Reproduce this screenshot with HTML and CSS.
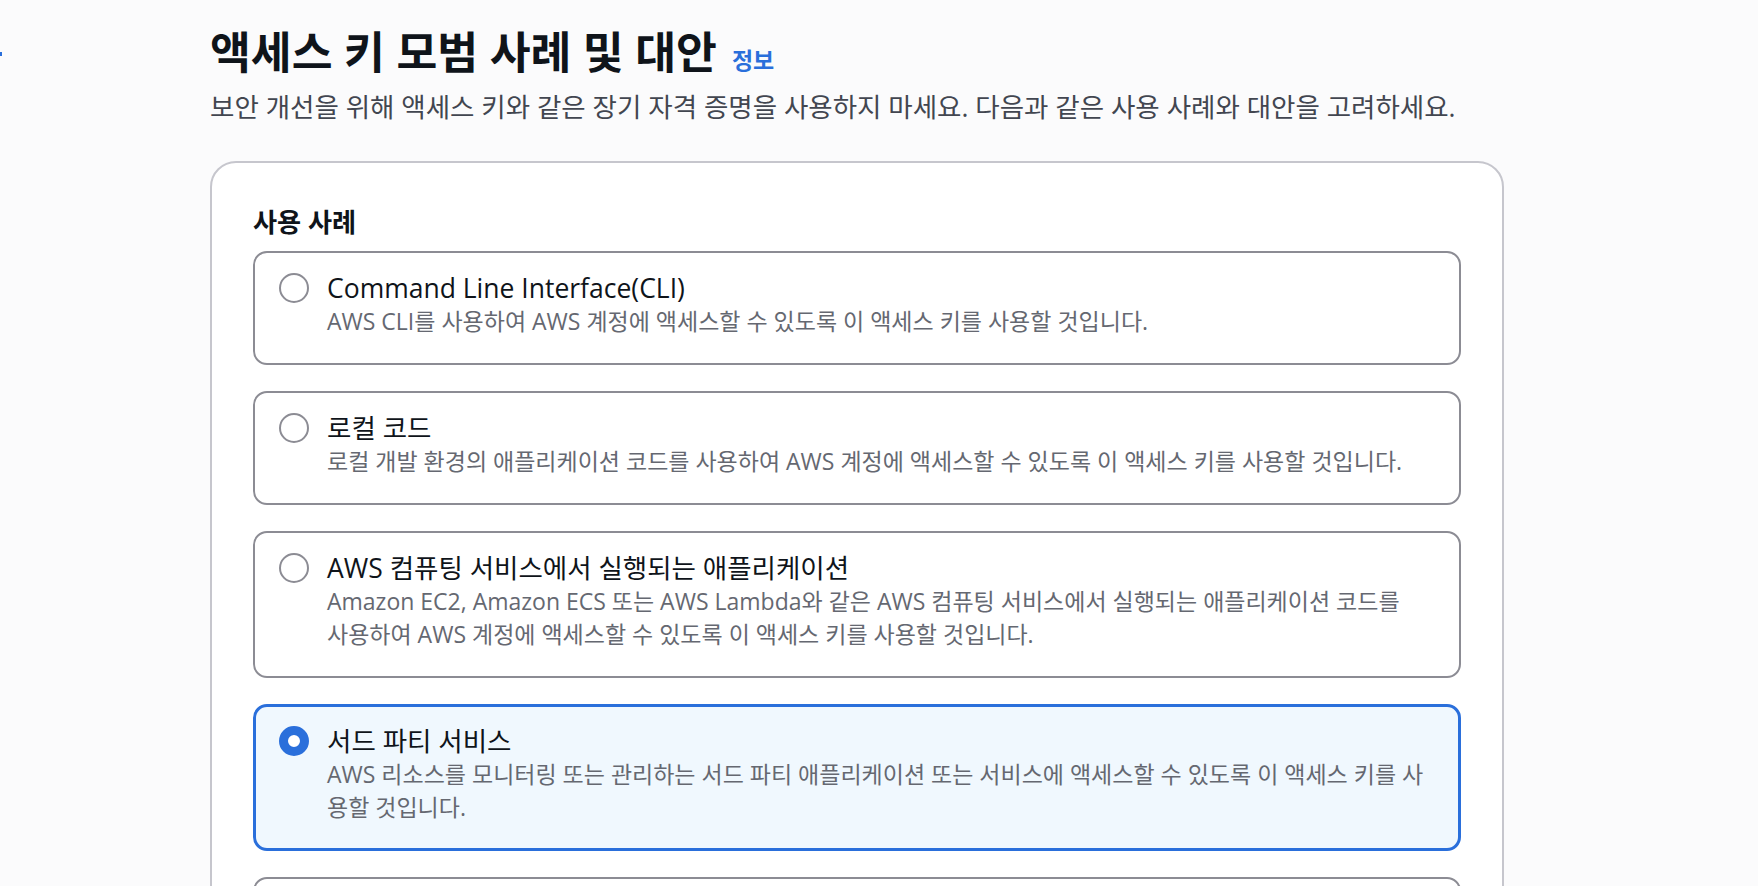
FILE: index.html
```html
<!DOCTYPE html>
<html lang="ko">
<head>
    <meta charset="UTF-8">
    <meta name="viewport" content="width=device-width, initial-scale=1.0">
    <title>액세스 키 모범 사례 및 대안</title>
    <link rel="stylesheet" href="styles.css">
</head>
<body>
    <div class="layout">
        <div class="rail"><span class="rail-mark"></span></div>

        <main class="content">
            <header class="page-header">
                <div class="title-row">
                    <h1>액세스 키 모범 사례 및 대안</h1>
                    <a href="#" class="info-link">정보</a>
                </div>
                <p class="page-desc">보안 개선을 위해 액세스 키와 같은 장기 자격 증명을 사용하지 마세요. 다음과 같은 사용 사례와 대안을 고려하세요.</p>
            </header>

            <section class="panel">
                <h2>사용 사례</h2>

                <div class="tiles">
                    <label class="tile">
                        <input type="radio" name="usecase" class="radio" value="cli">
                        <span class="tile-text">
                            <span class="tile-title">Command Line Interface(CLI)</span>
                            <span class="tile-desc">AWS CLI를 사용하여 AWS 계정에 액세스할 수 있도록 이 액세스 키를 사용할 것입니다.</span>
                        </span>
                    </label>

                    <label class="tile">
                        <input type="radio" name="usecase" class="radio" value="local">
                        <span class="tile-text">
                            <span class="tile-title">로컬 코드</span>
                            <span class="tile-desc">로컬 개발 환경의 애플리케이션 코드를 사용하여 AWS 계정에 액세스할 수 있도록 이 액세스 키를 사용할 것입니다.</span>
                        </span>
                    </label>

                    <label class="tile">
                        <input type="radio" name="usecase" class="radio" value="compute">
                        <span class="tile-text">
                            <span class="tile-title">AWS 컴퓨팅 서비스에서 실행되는 애플리케이션</span>
                            <span class="tile-desc">Amazon EC2, Amazon ECS 또는 AWS Lambda와 같은 AWS 컴퓨팅 서비스에서 실행되는 애플리케이션 코드를 <span class="nowrap">사용하여</span> AWS 계정에 액세스할 수 있도록 이 액세스 키를 사용할 것입니다.</span>
                        </span>
                    </label>

                    <label class="tile selected">
                        <input type="radio" name="usecase" class="radio" value="third-party" checked>
                        <span class="tile-text">
                            <span class="tile-title">서드 파티 서비스</span>
                            <span class="tile-desc">AWS 리소스를 모니터링 또는 관리하는 서드 파티 애플리케이션 또는 서비스에 액세스할 수 있도록 이 액세스 키를 사용할 것입니다.</span>
                        </span>
                    </label>

                    <label class="tile">
                        <input type="radio" name="usecase" class="radio" value="outside">
                        <span class="tile-text">
                            <span class="tile-title">AWS 외부에서 실행되는 애플리케이션</span>
                            <span class="tile-desc">AWS 리소스에 액세스해야 하는 데이터 센터의 워크로드 또는 AWS 외부의 기타 인프라에 대해 이 액세스 키를 사용할 것입니다.</span>
                        </span>
                    </label>

                    <label class="tile">
                        <input type="radio" name="usecase" class="radio" value="other">
                        <span class="tile-text">
                            <span class="tile-title">기타</span>
                            <span class="tile-desc">사용 사례가 여기에 나열되어 있지 않습니다.</span>
                        </span>
                    </label>
                </div>
            </section>
        </main>
    </div>
</body>
</html>
```

FILE: styles.css
```css
:root {
    --text-color: #0f141a;
    --text-secondary: #424650;
    --text-muted: #656871;
    --link-color: #2a6fdb;
    --border-input: #8c8c94;
    --border-divider: #c6c6cd;
    --selected-bg: #f0f8fe;
}

* {
    margin: 0;
    padding: 0;
    box-sizing: border-box;
}

body {
    background-color: #fbfbfc;
    color: var(--text-color);
    font-family: 'Open Sans', 'Noto Sans CJK KR', sans-serif;
}

.layout {
    display: flex;
    align-items: flex-start;
}

.rail {
    width: 2px;
    flex-shrink: 0;
}

.rail-mark {
    display: block;
    width: 2px;
    height: 4px;
    margin-top: 52px;
    background-color: var(--link-color);
}

.content {
    flex: 1;
    padding: 27px 0 0 208px;
}

.title-row {
    display: flex;
    align-items: baseline;
    gap: 15px;
}

h1 {
    font-size: 44.4px;
    line-height: 50px;
    font-weight: 700;
}

.info-link {
    font-size: 23px;
    font-weight: 700;
    color: var(--link-color);
    text-decoration: none;
}

.page-desc {
    margin: 13px 0 37px;
    font-size: 26.5px;
    line-height: 34px;
    color: var(--text-secondary);
}

.panel {
    width: 1294px;
    padding: 44px 41px 41px;
    background-color: white;
    border: 2px solid var(--border-divider);
    border-radius: 26px;
}

h2 {
    font-size: 26.2px;
    line-height: 30px;
    font-weight: 700;
    margin-bottom: 14px;
}

.tiles {
    display: flex;
    flex-direction: column;
    gap: 26px;
}

.tile {
    display: flex;
    gap: 18px;
    padding: 18px 24px 25px;
    background-color: white;
    border: 2px solid var(--border-input);
    border-radius: 14px;
    cursor: pointer;
}

.tile.selected {
    padding: 17px 23px 24px;
    background-color: var(--selected-bg);
    border: 3px solid var(--link-color);
}

.radio {
    appearance: none;
    flex-shrink: 0;
    width: 30px;
    height: 30px;
    margin-top: 2px;
    background-color: white;
    border: 2px solid var(--border-input);
    border-radius: 50%;
    cursor: pointer;
}

.radio:checked {
    border: 9px solid var(--link-color);
}

.tile-text {
    display: flex;
    flex-direction: column;
}

.tile-title {
    font-size: 26.5px;
    line-height: 34px;
}

.tile-desc {
    font-size: 23px;
    line-height: 33px;
    color: var(--text-muted);
}

.nowrap {
    white-space: nowrap;
}
```
